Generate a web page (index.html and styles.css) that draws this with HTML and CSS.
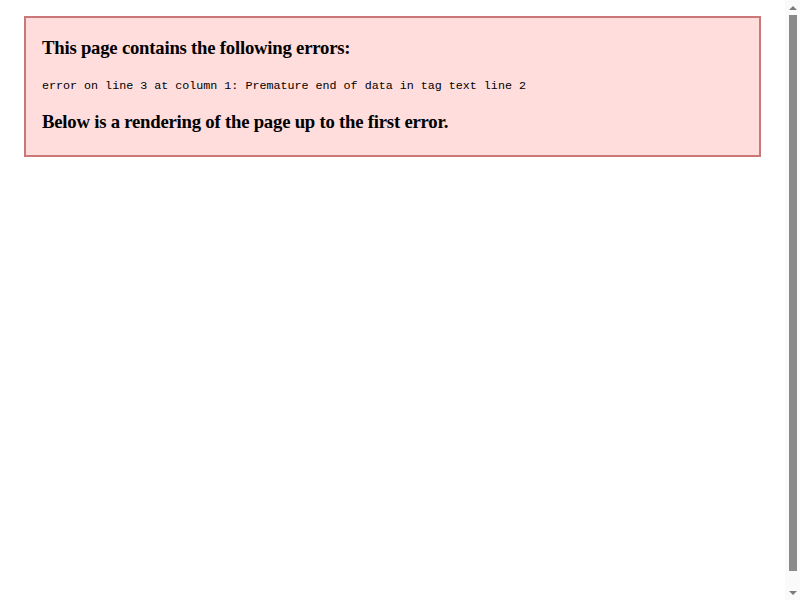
FILE: index.html
```html
<!DOCTYPE html>
<html>
<head>
<meta charset="utf-8">
<link rel="stylesheet" href="styles.css">
</head>
<body>
<div class="parsererror">
  <h3 class="title">This page contains the following errors:</h3>
  <div class="msg">error on line 3 at column 1: Premature end of data in tag text line 2</div>
  <h3 class="title">Below is a rendering of the page up to the first error.</h3>
</div>
<div class="scrollbar">
  <div class="arrow"><span class="tri-up"></span></div>
  <div class="track"><div class="thumb"></div></div>
  <div class="arrow"><span class="tri-down"></span></div>
</div>
</body>
</html>
```
FILE: styles.css
```css
html {
  background: #fff;
}
body {
  margin: 0;
  padding: 16px 39px 0 24px;
  font-family: "Liberation Serif", serif;
}
.parsererror {
  display: block;
  border: 2px solid #c77;
  padding: 0 16px 3.5px;
  margin: 0;
  background-color: #fdd;
  color: #000;
}
.title {
  font-family: "Liberation Serif", serif;
  font-size: 18.72px;
  letter-spacing: -0.22px;
  font-weight: bold;
  margin: 18.72px 0;
}
.msg {
  white-space: pre;
  font-family: "Liberation Mono", monospace;
  font-size: 11.7px;
  line-height: 11px;
  padding-top: 4px;
}
.scrollbar {
  position: fixed;
  top: 0;
  right: 0;
  width: 15px;
  height: 100%;
  background: #fafafa;
  display: flex;
  flex-direction: column;
}
.arrow {
  height: 15px;
  display: flex;
  align-items: center;
  justify-content: center;
}
.tri-up {
  width: 0;
  height: 0;
  border-left: 4px solid transparent;
  border-right: 4px solid transparent;
  border-bottom: 4px solid #7a7a7a;
}
.tri-down {
  width: 0;
  height: 0;
  border-left: 4px solid transparent;
  border-right: 4px solid transparent;
  border-top: 4px solid #7a7a7a;
}
.track {
  flex: 1;
  display: flex;
  justify-content: center;
}
.thumb {
  width: 8px;
  height: 97.5%;
  background: #8a8a8a;
}
```
